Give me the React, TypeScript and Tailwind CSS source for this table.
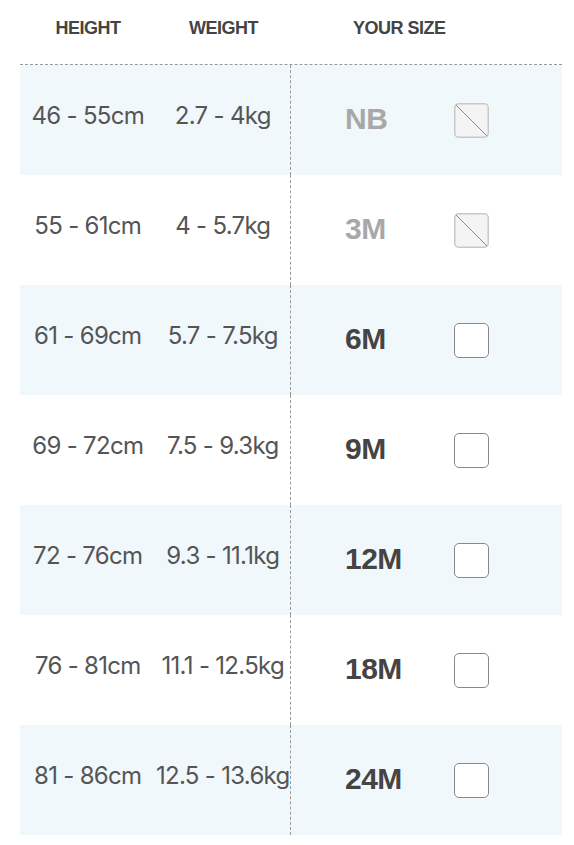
import React from 'react';

type Row = { height: string; weight: string; size: string; disabled: boolean };

const rows: Row[] = [
    { height: '46 - 55cm', weight: '2.7 - 4kg', size: 'NB', disabled: true },
    { height: '55 - 61cm', weight: '4 - 5.7kg', size: '3M', disabled: true },
    { height: '61 - 69cm', weight: '5.7 - 7.5kg', size: '6M', disabled: false },
    { height: '69 - 72cm', weight: '7.5 - 9.3kg', size: '9M', disabled: false },
    { height: '72 - 76cm', weight: '9.3 - 11.1kg', size: '12M', disabled: false },
    { height: '76 - 81cm', weight: '11.1 - 12.5kg', size: '18M', disabled: false },
    { height: '81 - 86cm', weight: '12.5 - 13.6kg', size: '24M', disabled: false },
];

const SizeTable = () => {
    return (
        <div className="w-[574px] min-h-[845px] bg-white pl-5 pr-3 font-['Inter',sans-serif]">
            <div className="flex h-16 items-center pb-2 text-[18px] font-bold tracking-[-0.5px] text-[#444] font-['Liberation_Sans',sans-serif]">
                <div className="w-[136px] text-center">HEIGHT</div>
                <div className="w-[135px] text-center">WEIGHT</div>
                <div className="pl-[62px]">YOUR SIZE</div>
            </div>
            <div className="border-t border-dashed border-[#999]">
                {rows.map((row, index) => (
                    <div key={index} className={`flex h-[110px] items-center ${index % 2 === 0 ? 'bg-[#f1f8fc]' : 'bg-white'}`}>
                        <div className="flex h-full w-[271px] items-center border-r border-dashed border-[#999] pb-2 text-[24px] tracking-[-0.7px] text-[#555]">
                            <div className="w-[136px] whitespace-nowrap text-center">{row.height}</div>
                            <div className="w-[135px] whitespace-nowrap text-center">{row.weight}</div>
                        </div>
                        <div className="flex items-center pl-[54px]">
                            <span className={`w-[109px] pb-1 text-[30px] font-bold tracking-[-0.5px] font-['Liberation_Sans',sans-serif] ${row.disabled ? 'text-[#a8a8a8]' : 'text-[#444]'}`}>
                                {row.size}
                            </span>
                            {row.disabled ? (
                                <svg width="35" height="35" viewBox="0 0 35 35">
                                    <rect x="0.75" y="0.75" width="33.5" height="33.5" rx="4" fill="#f4f4f4" stroke="#c8c8c8" strokeWidth="1.5" />
                                    <line x1="2" y1="2" x2="33" y2="33" stroke="#8a8a8a" strokeWidth="1" />
                                </svg>
                            ) : (
                                <div className="h-[35px] w-[35px] rounded-[5px] border-[1.5px] border-[#888] bg-white" />
                            )}
                        </div>
                    </div>
                ))}
            </div>
        </div>
    );
};

export default function App() {
    return <SizeTable />;
}
